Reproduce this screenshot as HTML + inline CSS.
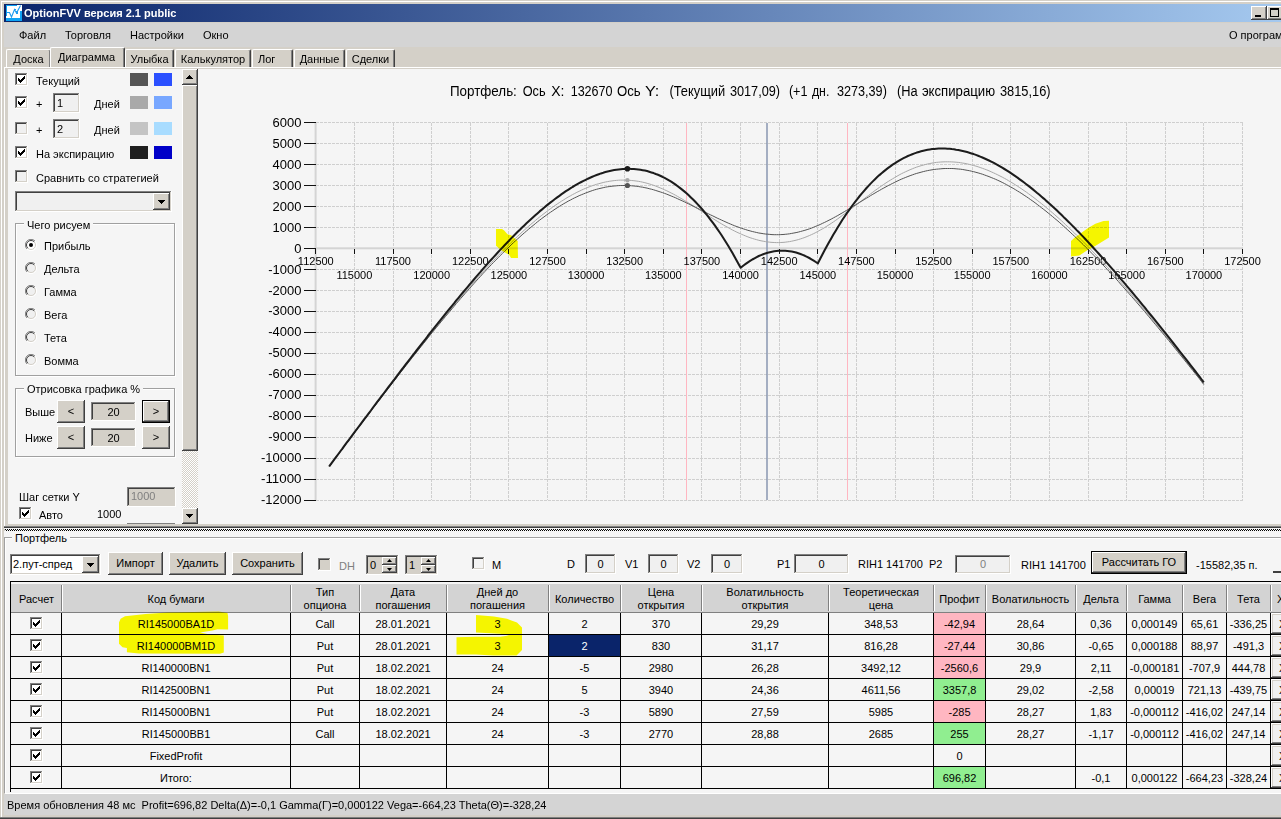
<!DOCTYPE html>
<html lang="ru"><head><meta charset="utf-8"><title>OptionFVV версия 2.1 public</title>
<style>
html,body{margin:0;padding:0;background:#d4d0c8;overflow:hidden;}
#w{position:relative;width:1281px;height:819px;overflow:hidden;font-family:"Liberation Sans",sans-serif;font-size:11px;line-height:13px;color:#000;}
.a{position:absolute;box-sizing:border-box;}
.t{white-space:nowrap;margin-top:1px;}
.th,.td{text-align:center;}
.th{line-height:13px;}
.raised{box-shadow:inset -1px -1px #404040,inset 1px 1px #fff,inset -2px -2px #808080,inset 2px 2px #d4d0c8;}
.sunken{box-shadow:inset -1px -1px #fff,inset 1px 1px #808080,inset -2px -2px #d4d0c8,inset 2px 2px #404040;}
.grp{border:1px solid #a0a0a0;box-shadow:1px 1px 0 #fff, inset 1px 1px 0 #fff;}
.tab{background:#d4d0c8;border-top:1px solid #fff;border-left:1px solid #fff;border-right:1px solid #404040;box-shadow:inset -1px 0 #808080;border-radius:2px 2px 0 0;}
.chart{position:absolute;left:0;top:0;font-family:"Liberation Sans",sans-serif;}
.chart .yl{font-size:13.6px;fill:#000;}
.chart .xl{font-size:11px;fill:#000;}
.chart .ct{font-size:13.8px;fill:#000;}
.hl{fill:#ffff00;mix-blend-mode:multiply;}
</style></head>
<body><div id="w">
<div class="a" style="left:0px;top:0px;width:1281px;height:819px;background:#d4d0c8"></div>
<div class="a" style="left:1px;top:1px;width:1280px;height:1px;background:#fff"></div>
<div class="a" style="left:1px;top:1px;width:1px;height:816px;background:#fff"></div>
<div class="a" style="left:0px;top:817px;width:1281px;height:1px;background:#808080"></div>
<div class="a" style="left:0px;top:818px;width:1281px;height:1px;background:#404040"></div>
<div class="a" style="left:4px;top:4px;width:1277px;height:18px;background:linear-gradient(90deg,#0a246a 0,#a6caf0 1286px)"></div>
<svg class="a" style="left:6px;top:5px" width="16" height="16" viewBox="0 0 16 16" shape-rendering="crispEdges"><rect width="16" height="16" fill="#fff"/><path d="M0,0 H11 V1 H1 V11 H0 Z M0,13 H16 V6 H14 V13 H0 V16 H16 V13" fill="#0ea2f4"/><rect x="0" y="14" width="16" height="2" fill="#0ea2f4"/><path d="M1,7.5 H3.5 L5.5,12 L8.5,4.5 L10.5,8 L14.5,0.5" stroke="#1e9cf0" stroke-width="1.1" fill="none" shape-rendering="auto"/><rect x="8" y="4" width="2" height="1" fill="#1e9cf0"/><rect x="10" y="6" width="2" height="3" fill="#1e9cf0"/></svg>
<div class="a t" style="left:24px;top:6px;color:#fff;font-weight:bold;">OptionFVV версия 2.1 public</div>
<div class="a raised" style="left:1251px;top:6px;width:16px;height:14px;background:#d4d0c8"><div class="a" style="left:4px;top:9px;width:6px;height:2px;background:#000"></div></div>
<div class="a raised" style="left:1267px;top:6px;width:16px;height:14px;background:#d4d0c8"><div class="a" style="left:3px;top:2px;width:9px;height:9px;border:1px solid #000;border-top-width:2px;box-sizing:border-box"></div></div>
<div class="a" style="left:4px;top:23px;width:1277px;height:24px;background:#d4d4d4"></div>
<div class="a t" style="left:19px;top:28px;">Файл</div>
<div class="a t" style="left:65px;top:28px;">Торговля</div>
<div class="a t" style="left:130px;top:28px;">Настройки</div>
<div class="a t" style="left:203px;top:28px;">Окно</div>
<div class="a t" style="left:1229px;top:28px;">О программе</div>
<div class="a tab" style="left:6px;top:49px;width:45px;height:18px;"><div class="a t" style="left:0;top:2px;width:43px;text-align:center">Доска</div></div>
<div class="a tab" style="left:125px;top:49px;width:49px;height:18px;"><div class="a t" style="left:0;top:2px;width:47px;text-align:center">Улыбка</div></div>
<div class="a tab" style="left:175px;top:49px;width:76px;height:18px;"><div class="a t" style="left:0;top:2px;width:74px;text-align:center">Калькулятор</div></div>
<div class="a tab" style="left:252px;top:49px;width:41px;height:18px;"><div class="a t" style="left:5px;top:2px">Лог</div></div>
<div class="a tab" style="left:294px;top:49px;width:51px;height:18px;"><div class="a t" style="left:0;top:2px;width:49px;text-align:center">Данные</div></div>
<div class="a tab" style="left:346px;top:49px;width:49px;height:18px;"><div class="a t" style="left:0;top:2px;width:47px;text-align:center">Сделки</div></div>
<div class="a tab" style="left:50px;top:47px;width:75px;height:21px;"><div class="a t" style="left:7px;top:2px">Диаграмма</div></div>
<div class="a" style="left:4px;top:67px;width:1277px;height:1px;background:#fff"></div>
<div class="a" style="left:4px;top:67px;width:1px;height:459px;background:#fff"></div>
<div class="a" style="left:8px;top:69px;width:1273px;height:455px;background:#f5f5f5"></div>
<div class="a sunken" style="left:15px;top:73px;width:13px;height:13px;background:#fff"><svg class="a" style="left:3px;top:3px" width="7" height="7" viewBox="0 0 7 7" shape-rendering="crispEdges"><path d="M0.5,2 V5 M1.5,3 V6 M2.5,4 V7 M3.5,3 V6 M4.5,2 V5 M5.5,1 V4 M6.5,0 V3" stroke="#000" stroke-width="1" fill="none"/></svg></div>
<div class="a t" style="left:36px;top:74px;">Текущий</div>
<div class="a" style="left:130px;top:73px;width:18px;height:13px;background:#555"></div>
<div class="a" style="left:154px;top:73px;width:18px;height:13px;background:#2b50ff"></div>
<div class="a sunken" style="left:15px;top:96px;width:13px;height:13px;background:#fff"><svg class="a" style="left:3px;top:3px" width="7" height="7" viewBox="0 0 7 7" shape-rendering="crispEdges"><path d="M0.5,2 V5 M1.5,3 V6 M2.5,4 V7 M3.5,3 V6 M4.5,2 V5 M5.5,1 V4 M6.5,0 V3" stroke="#000" stroke-width="1" fill="none"/></svg></div>
<div class="a t" style="left:36px;top:97px;">+</div>
<div class="a sunken" style="left:53px;top:93px;width:27px;height:20px;background:#f0f0f0"><div class="a t" style="left:4px;top:3px">1</div></div>
<div class="a t" style="left:94px;top:97px;">Дней</div>
<div class="a" style="left:130px;top:96px;width:18px;height:13px;background:#a9a9a9"></div>
<div class="a" style="left:154px;top:96px;width:18px;height:13px;background:#78a7ff"></div>
<div class="a sunken" style="left:15px;top:122px;width:13px;height:13px;background:#f0f0f0"></div>
<div class="a t" style="left:36px;top:123px;">+</div>
<div class="a sunken" style="left:53px;top:119px;width:27px;height:20px;background:#f0f0f0"><div class="a t" style="left:4px;top:3px">2</div></div>
<div class="a t" style="left:94px;top:123px;">Дней</div>
<div class="a" style="left:130px;top:122px;width:18px;height:13px;background:#c4c4c4"></div>
<div class="a" style="left:154px;top:122px;width:18px;height:13px;background:#a8dcff"></div>
<div class="a sunken" style="left:15px;top:146px;width:13px;height:13px;background:#fff"><svg class="a" style="left:3px;top:3px" width="7" height="7" viewBox="0 0 7 7" shape-rendering="crispEdges"><path d="M0.5,2 V5 M1.5,3 V6 M2.5,4 V7 M3.5,3 V6 M4.5,2 V5 M5.5,1 V4 M6.5,0 V3" stroke="#000" stroke-width="1" fill="none"/></svg></div>
<div class="a t" style="left:36px;top:147px;">На экспирацию</div>
<div class="a" style="left:130px;top:146px;width:18px;height:13px;background:#1e1e1e"></div>
<div class="a" style="left:154px;top:146px;width:18px;height:13px;background:#0000c8"></div>
<div class="a sunken" style="left:15px;top:170px;width:13px;height:13px;background:#f0f0f0"></div>
<div class="a t" style="left:36px;top:171px;">Сравнить со стратегией</div>
<div class="a sunken" style="left:15px;top:191px;width:157px;height:21px;background:#f0f0f0"><div class="a raised" style="left:138px;top:2px;width:17px;height:17px;background:#d4d0c8"><svg class="a" style="left:5px;top:7px" width="7" height="4" viewBox="0 0 7 4" shape-rendering="crispEdges"><path d="M0,0 H7 L3.5,4 Z" fill="#000"/></svg></div></div>
<div class="a grp" style="left:15px;top:223px;width:160px;height:153px;"></div>
<div class="a t" style="left:24px;top:218px;background:#f5f5f5;padding:0 3px">Чего рисуем</div>
<svg class="a" style="left:25px;top:239px" width="12" height="12" viewBox="0 0 12 12"><circle cx="6" cy="6" r="5.5" fill="#fff"/><path d="M10,2 A5.5,5.5 0 0 0 2,10" stroke="#808080" stroke-width="1" fill="none"/><path d="M2,10 A5.5,5.5 0 0 0 10,2" stroke="#fff" stroke-width="1" fill="none"/><path d="M2.8,9.2 A4.5,4.5 0 0 0 9.2,2.8" stroke="#d4d0c8" stroke-width="1" fill="none"/><path d="M9.2,2.8 A4.5,4.5 0 0 0 2.8,9.2" stroke="#404040" stroke-width="1" fill="none"/><circle cx="6" cy="6" r="2" fill="#000"/></svg>
<div class="a t" style="left:44px;top:239px;">Прибыль</div>
<svg class="a" style="left:25px;top:262px" width="12" height="12" viewBox="0 0 12 12"><circle cx="6" cy="6" r="5.5" fill="#f0f0f0"/><path d="M10,2 A5.5,5.5 0 0 0 2,10" stroke="#808080" stroke-width="1" fill="none"/><path d="M2,10 A5.5,5.5 0 0 0 10,2" stroke="#fff" stroke-width="1" fill="none"/><path d="M2.8,9.2 A4.5,4.5 0 0 0 9.2,2.8" stroke="#d4d0c8" stroke-width="1" fill="none"/><path d="M9.2,2.8 A4.5,4.5 0 0 0 2.8,9.2" stroke="#404040" stroke-width="1" fill="none"/></svg>
<div class="a t" style="left:44px;top:262px;">Дельта</div>
<svg class="a" style="left:25px;top:285px" width="12" height="12" viewBox="0 0 12 12"><circle cx="6" cy="6" r="5.5" fill="#f0f0f0"/><path d="M10,2 A5.5,5.5 0 0 0 2,10" stroke="#808080" stroke-width="1" fill="none"/><path d="M2,10 A5.5,5.5 0 0 0 10,2" stroke="#fff" stroke-width="1" fill="none"/><path d="M2.8,9.2 A4.5,4.5 0 0 0 9.2,2.8" stroke="#d4d0c8" stroke-width="1" fill="none"/><path d="M9.2,2.8 A4.5,4.5 0 0 0 2.8,9.2" stroke="#404040" stroke-width="1" fill="none"/></svg>
<div class="a t" style="left:44px;top:285px;">Гамма</div>
<svg class="a" style="left:25px;top:308px" width="12" height="12" viewBox="0 0 12 12"><circle cx="6" cy="6" r="5.5" fill="#f0f0f0"/><path d="M10,2 A5.5,5.5 0 0 0 2,10" stroke="#808080" stroke-width="1" fill="none"/><path d="M2,10 A5.5,5.5 0 0 0 10,2" stroke="#fff" stroke-width="1" fill="none"/><path d="M2.8,9.2 A4.5,4.5 0 0 0 9.2,2.8" stroke="#d4d0c8" stroke-width="1" fill="none"/><path d="M9.2,2.8 A4.5,4.5 0 0 0 2.8,9.2" stroke="#404040" stroke-width="1" fill="none"/></svg>
<div class="a t" style="left:44px;top:308px;">Вега</div>
<svg class="a" style="left:25px;top:331px" width="12" height="12" viewBox="0 0 12 12"><circle cx="6" cy="6" r="5.5" fill="#f0f0f0"/><path d="M10,2 A5.5,5.5 0 0 0 2,10" stroke="#808080" stroke-width="1" fill="none"/><path d="M2,10 A5.5,5.5 0 0 0 10,2" stroke="#fff" stroke-width="1" fill="none"/><path d="M2.8,9.2 A4.5,4.5 0 0 0 9.2,2.8" stroke="#d4d0c8" stroke-width="1" fill="none"/><path d="M9.2,2.8 A4.5,4.5 0 0 0 2.8,9.2" stroke="#404040" stroke-width="1" fill="none"/></svg>
<div class="a t" style="left:44px;top:331px;">Тета</div>
<svg class="a" style="left:25px;top:354px" width="12" height="12" viewBox="0 0 12 12"><circle cx="6" cy="6" r="5.5" fill="#f0f0f0"/><path d="M10,2 A5.5,5.5 0 0 0 2,10" stroke="#808080" stroke-width="1" fill="none"/><path d="M2,10 A5.5,5.5 0 0 0 10,2" stroke="#fff" stroke-width="1" fill="none"/><path d="M2.8,9.2 A4.5,4.5 0 0 0 9.2,2.8" stroke="#d4d0c8" stroke-width="1" fill="none"/><path d="M9.2,2.8 A4.5,4.5 0 0 0 2.8,9.2" stroke="#404040" stroke-width="1" fill="none"/></svg>
<div class="a t" style="left:44px;top:354px;">Вомма</div>
<div class="a grp" style="left:15px;top:388px;width:160px;height:69px;"></div>
<div class="a t" style="left:24px;top:382px;background:#f5f5f5;padding:0 3px">Отрисовка графика %</div>
<div class="a t" style="left:25px;top:405px;">Выше</div>
<div class="a t" style="left:25px;top:431px;">Ниже</div>
<div class="a raised" style="left:57px;top:400px;width:28px;height:23px;background:#d4d0c8"><div class="a t" style="left:0;top:4px;width:28px;text-align:center">&lt;</div></div>
<div class="a sunken" style="left:91px;top:402px;width:45px;height:19px;background:#d4d0c8"><div class="a t" style="left:0;top:3px;width:45px;text-align:center">20</div></div>
<div class="a" style="left:142px;top:400px;width:28px;height:23px;background:#000"><div class="a raised" style="left:1px;top:1px;width:26px;height:21px;background:#d4d0c8"><div class="a t" style="left:0;top:3px;width:26px;text-align:center">&gt;</div></div></div>
<div class="a raised" style="left:57px;top:426px;width:28px;height:23px;background:#d4d0c8"><div class="a t" style="left:0;top:4px;width:28px;text-align:center">&lt;</div></div>
<div class="a sunken" style="left:91px;top:428px;width:45px;height:19px;background:#d4d0c8"><div class="a t" style="left:0;top:3px;width:45px;text-align:center">20</div></div>
<div class="a raised" style="left:142px;top:426px;width:28px;height:23px;background:#d4d0c8"><div class="a t" style="left:0;top:4px;width:28px;text-align:center">&gt;</div></div>
<div class="a t" style="left:19px;top:490px;">Шаг сетки Y</div>
<div class="a sunken" style="left:127px;top:487px;width:49px;height:20px;background:#d4d0c8"><div class="a t" style="left:4px;top:2px;color:#808080">1000</div></div>
<div class="a sunken" style="left:19px;top:507px;width:13px;height:13px;background:#fff"><svg class="a" style="left:3px;top:3px" width="7" height="7" viewBox="0 0 7 7" shape-rendering="crispEdges"><path d="M0.5,2 V5 M1.5,3 V6 M2.5,4 V7 M3.5,3 V6 M4.5,2 V5 M5.5,1 V4 M6.5,0 V3" stroke="#000" stroke-width="1" fill="none"/></svg></div>
<div class="a t" style="left:39px;top:508px;">Авто</div>
<div class="a t" style="left:97px;top:507px;">1000</div>
<div class="a" style="left:127px;top:523px;width:48px;height:1px;background:#808080"></div>
<div class="a" style="left:182px;top:69px;width:16px;height:455px;background:#eae8e4;background-image:repeating-conic-gradient(#fff 0 25%,#d4d0c8 0 50%);background-size:2px 2px"></div>
<div class="a raised" style="left:182px;top:69px;width:16px;height:16px;background:#d4d0c8"><svg class="a" style="left:4px;top:6px" width="7" height="4" viewBox="0 0 7 4" shape-rendering="crispEdges"><path d="M0,4 H7 L3.5,0 Z" fill="#000"/></svg></div>
<div class="a raised" style="left:182px;top:85px;width:16px;height:366px;background:#d4d0c8"></div>
<div class="a raised" style="left:182px;top:508px;width:16px;height:16px;background:#d4d0c8"><svg class="a" style="left:4px;top:6px" width="7" height="4" viewBox="0 0 7 4" shape-rendering="crispEdges"><path d="M0,0 H7 L3.5,4 Z" fill="#000"/></svg></div>
<div class="a" style="left:198px;top:68px;width:1083px;height:456px;overflow:hidden"><svg class="chart" width="1083" height="456" viewBox="198 68 1083 456">
<path d="M316,122.5 H1243 M316,143.5 H1243 M316,164.5 H1243 M316,185.5 H1243 M316,206.5 H1243 M316,227.5 H1243 M316,248.5 H1243 M316,269.5 H1243 M316,290.5 H1243 M316,311.5 H1243 M316,332.5 H1243 M316,353.5 H1243 M316,374.5 H1243 M316,395.5 H1243 M316,416.5 H1243 M316,437.5 H1243 M316,458.5 H1243 M316,479.5 H1243 M316,500.5 H1243 M354.5,123 V500 M393.5,123 V500 M431.5,123 V500 M470.5,123 V500 M508.5,123 V500 M547.5,123 V500 M586.5,123 V500 M624.5,123 V500 M663.5,123 V500 M701.5,123 V500 M740.5,123 V500 M779.5,123 V500 M817.5,123 V500 M856.5,123 V500 M895.5,123 V500 M933.5,123 V500 M972.5,123 V500 M1010.5,123 V500 M1049.5,123 V500 M1088.5,123 V500 M1126.5,123 V500 M1165.5,123 V500 M1203.5,123 V500 M1242.5,123 V500" stroke="#cfcfcf" stroke-width="1" stroke-dasharray="3 1" fill="none" shape-rendering="crispEdges"/>
<rect x="314.6" y="123" width="2" height="377" fill="#d4d4d4"/>
<rect x="314.6" y="247.3" width="928" height="2" fill="#d4d4d4"/>
<path d="M304,122.5 H316 M304,143.5 H316 M304,164.5 H316 M304,185.5 H316 M304,206.5 H316 M304,227.5 H316 M304,248.5 H316 M304,269.5 H316 M304,290.5 H316 M304,311.5 H316 M304,332.5 H316 M304,353.5 H316 M304,374.5 H316 M304,395.5 H316 M304,416.5 H316 M304,437.5 H316 M304,458.5 H316 M304,479.5 H316 M304,500.5 H316 M315.5,249 V254 M354.5,249 V254 M393.5,249 V254 M431.5,249 V254 M470.5,249 V254 M508.5,249 V254 M547.5,249 V254 M586.5,249 V254 M624.5,249 V254 M663.5,249 V254 M701.5,249 V254 M740.5,249 V254 M779.5,249 V254 M817.5,249 V254 M856.5,249 V254 M895.5,249 V254 M933.5,249 V254 M972.5,249 V254 M1010.5,249 V254 M1049.5,249 V254 M1088.5,249 V254 M1126.5,249 V254 M1165.5,249 V254 M1203.5,249 V254 M1242.5,249 V254" stroke="#111" stroke-width="1" fill="none" shape-rendering="crispEdges"/>
<path d="M686.5,123 V500 M847.5,123 V500" stroke="#ffb6c1" stroke-width="1" shape-rendering="crispEdges"/>
<path d="M767,123 V500" stroke="#8896b0" stroke-width="1.5"/>
<text x="272.6" y="126.8" class="yl" textLength="28.9" lengthAdjust="spacingAndGlyphs">6000</text>
<text x="272.6" y="147.8" class="yl" textLength="28.9" lengthAdjust="spacingAndGlyphs">5000</text>
<text x="272.6" y="168.7" class="yl" textLength="28.9" lengthAdjust="spacingAndGlyphs">4000</text>
<text x="272.6" y="189.7" class="yl" textLength="28.9" lengthAdjust="spacingAndGlyphs">3000</text>
<text x="272.6" y="210.6" class="yl" textLength="28.9" lengthAdjust="spacingAndGlyphs">2000</text>
<text x="272.6" y="231.6" class="yl" textLength="28.9" lengthAdjust="spacingAndGlyphs">1000</text>
<text x="294.3" y="252.6" class="yl" textLength="7.2" lengthAdjust="spacingAndGlyphs">0</text>
<text x="268.2" y="273.5" class="yl" textLength="33.2" lengthAdjust="spacingAndGlyphs">-1000</text>
<text x="268.2" y="294.5" class="yl" textLength="33.2" lengthAdjust="spacingAndGlyphs">-2000</text>
<text x="268.2" y="315.4" class="yl" textLength="33.2" lengthAdjust="spacingAndGlyphs">-3000</text>
<text x="268.2" y="336.4" class="yl" textLength="33.2" lengthAdjust="spacingAndGlyphs">-4000</text>
<text x="268.2" y="357.4" class="yl" textLength="33.2" lengthAdjust="spacingAndGlyphs">-5000</text>
<text x="268.2" y="378.3" class="yl" textLength="33.2" lengthAdjust="spacingAndGlyphs">-6000</text>
<text x="268.2" y="399.3" class="yl" textLength="33.2" lengthAdjust="spacingAndGlyphs">-7000</text>
<text x="268.2" y="420.3" class="yl" textLength="33.2" lengthAdjust="spacingAndGlyphs">-8000</text>
<text x="268.2" y="441.2" class="yl" textLength="33.2" lengthAdjust="spacingAndGlyphs">-9000</text>
<text x="261.0" y="462.2" class="yl" textLength="40.5" lengthAdjust="spacingAndGlyphs">-10000</text>
<text x="261.0" y="483.1" class="yl" textLength="40.5" lengthAdjust="spacingAndGlyphs">-11000</text>
<text x="261.0" y="504.1" class="yl" textLength="40.5" lengthAdjust="spacingAndGlyphs">-12000</text>
<text x="315.8" y="264.8" text-anchor="middle" class="xl">112500</text>
<text x="354.4" y="278.8" text-anchor="middle" class="xl">115000</text>
<text x="393.0" y="264.8" text-anchor="middle" class="xl">117500</text>
<text x="431.7" y="278.8" text-anchor="middle" class="xl">120000</text>
<text x="470.3" y="264.8" text-anchor="middle" class="xl">122500</text>
<text x="508.9" y="278.8" text-anchor="middle" class="xl">125000</text>
<text x="547.5" y="264.8" text-anchor="middle" class="xl">127500</text>
<text x="586.1" y="278.8" text-anchor="middle" class="xl">130000</text>
<text x="624.7" y="264.8" text-anchor="middle" class="xl">132500</text>
<text x="663.3" y="278.8" text-anchor="middle" class="xl">135000</text>
<text x="701.9" y="264.8" text-anchor="middle" class="xl">137500</text>
<text x="740.6" y="278.8" text-anchor="middle" class="xl">140000</text>
<text x="779.2" y="264.8" text-anchor="middle" class="xl">142500</text>
<text x="817.8" y="278.8" text-anchor="middle" class="xl">145000</text>
<text x="856.4" y="264.8" text-anchor="middle" class="xl">147500</text>
<text x="895.0" y="278.8" text-anchor="middle" class="xl">150000</text>
<text x="933.6" y="264.8" text-anchor="middle" class="xl">152500</text>
<text x="972.2" y="278.8" text-anchor="middle" class="xl">155000</text>
<text x="1010.8" y="264.8" text-anchor="middle" class="xl">157500</text>
<text x="1049.4" y="278.8" text-anchor="middle" class="xl">160000</text>
<text x="1088.1" y="264.8" text-anchor="middle" class="xl">162500</text>
<text x="1126.7" y="278.8" text-anchor="middle" class="xl">165000</text>
<text x="1165.3" y="264.8" text-anchor="middle" class="xl">167500</text>
<text x="1203.9" y="278.8" text-anchor="middle" class="xl">170000</text>
<text x="1242.5" y="264.8" text-anchor="middle" class="xl">172500</text>
<path d="M329.2,466.5 L331.4,463.5 L333.6,460.6 L335.8,457.6 L338.0,454.7 L340.2,451.8 L342.4,448.8 L344.5,445.9 L346.7,443.0 L348.9,440.1 L351.1,437.1 L353.3,434.2 L355.5,431.3 L357.7,428.4 L359.9,425.4 L362.1,422.5 L364.3,419.6 L366.5,416.7 L368.7,413.8 L370.9,410.9 L373.0,408.0 L375.2,405.1 L377.4,402.2 L379.6,399.4 L381.8,396.5 L384.0,393.6 L386.2,390.7 L388.4,387.9 L390.6,385.0 L392.8,382.1 L395.0,379.3 L397.2,376.4 L399.3,373.6 L401.5,370.8 L403.7,367.9 L405.9,365.1 L408.1,362.3 L410.3,359.5 L412.5,356.7 L414.7,353.9 L416.9,351.1 L419.1,348.3 L421.3,345.5 L423.5,342.8 L425.7,340.0 L427.8,337.3 L430.0,334.5 L432.2,331.8 L434.4,329.1 L436.6,326.4 L438.8,323.6 L441.0,321.0 L443.2,318.3 L445.4,315.6 L447.6,312.9 L449.8,310.3 L452.0,307.7 L454.2,305.0 L456.3,302.4 L458.5,299.8 L460.7,297.2 L462.9,294.7 L465.1,292.1 L467.3,289.6 L469.5,287.0 L471.7,284.5 L473.9,282.0 L476.1,279.6 L478.3,277.1 L480.5,274.7 L482.6,272.2 L484.8,269.8 L487.0,267.4 L489.2,265.1 L491.4,262.7 L493.6,260.4 L495.8,258.1 L498.0,255.8 L500.2,253.5 L502.4,251.3 L504.6,249.0 L506.8,246.8 L509.0,244.7 L511.1,242.5 L513.3,240.4 L515.5,238.3 L517.7,236.2 L519.9,234.2 L522.1,232.1 L524.3,230.1 L526.5,228.2 L528.7,226.2 L530.9,224.3 L533.1,222.5 L535.3,220.6 L537.4,218.8 L539.6,217.0 L541.8,215.3 L544.0,213.6 L546.2,211.9 L548.4,210.2 L550.6,208.6 L552.8,207.0 L555.0,205.5 L557.2,204.0 L559.4,202.6 L561.6,201.1 L563.8,199.8 L565.9,198.4 L568.1,197.1 L570.3,195.9 L572.5,194.6 L574.7,193.5 L576.9,192.3 L579.1,191.3 L581.3,190.2 L583.5,189.2 L585.7,188.3 L587.9,187.4 L590.1,186.5 L592.3,185.7 L594.4,185.0 L596.6,184.3 L598.8,183.7 L601.0,183.1 L603.2,182.5 L605.4,182.0 L607.6,181.6 L609.8,181.2 L612.0,180.9 L614.2,180.6 L616.4,180.4 L618.6,180.2 L620.7,180.1 L622.9,180.1 L625.1,180.1 L627.3,180.2 L629.5,180.3 L631.7,180.5 L633.9,180.7 L636.1,181.0 L638.3,181.3 L640.5,181.7 L642.7,182.2 L644.9,182.7 L647.1,183.3 L649.2,183.9 L651.4,184.6 L653.6,185.3 L655.8,186.1 L658.0,187.0 L660.2,187.9 L662.4,188.8 L664.6,189.8 L666.8,190.8 L669.0,191.9 L671.2,193.0 L673.4,194.1 L675.6,195.3 L677.7,196.5 L679.9,197.8 L682.1,199.0 L684.3,200.4 L686.5,201.7 L688.7,203.0 L690.9,204.4 L693.1,205.8 L695.3,207.2 L697.5,208.6 L699.7,210.0 L701.9,211.4 L704.0,212.9 L706.2,214.3 L708.4,215.7 L710.6,217.1 L712.8,218.5 L715.0,219.9 L717.2,221.2 L719.4,222.6 L721.6,223.9 L723.8,225.2 L726.0,226.4 L728.2,227.6 L730.4,228.8 L732.5,230.0 L734.7,231.1 L736.9,232.2 L739.1,233.2 L740.7,233.9 L741.3,234.2 L743.5,235.1 L745.7,236.0 L747.9,236.9 L750.1,237.7 L752.3,238.4 L754.5,239.1 L756.7,239.7 L758.8,240.3 L761.0,240.8 L763.2,241.2 L765.4,241.6 L767.6,241.9 L769.8,242.2 L772.0,242.4 L774.2,242.5 L776.4,242.6 L778.6,242.6 L780.8,242.5 L783.0,242.4 L785.2,242.2 L787.3,241.9 L789.5,241.6 L791.7,241.2 L793.9,240.7 L796.1,240.2 L798.3,239.6 L800.5,238.9 L802.7,238.2 L804.9,237.4 L807.1,236.5 L809.3,235.6 L811.5,234.6 L813.7,233.6 L815.8,232.5 L817.9,231.4 L818.0,231.3 L820.2,230.1 L822.4,228.9 L824.6,227.6 L826.8,226.2 L829.0,224.8 L831.2,223.4 L833.4,221.9 L835.6,220.4 L837.8,218.8 L840.0,217.2 L842.1,215.6 L844.3,214.0 L846.5,212.4 L848.7,210.7 L850.9,209.0 L853.1,207.3 L855.3,205.6 L857.5,203.9 L859.7,202.2 L861.9,200.5 L864.1,198.8 L866.3,197.1 L868.5,195.5 L870.6,193.8 L872.8,192.2 L875.0,190.5 L877.2,189.0 L879.4,187.4 L881.6,185.9 L883.8,184.4 L886.0,182.9 L888.2,181.5 L890.4,180.1 L892.6,178.8 L894.8,177.5 L897.0,176.2 L899.1,175.0 L901.3,173.8 L903.5,172.7 L905.7,171.7 L907.9,170.7 L910.1,169.7 L912.3,168.8 L914.5,167.9 L916.7,167.1 L918.9,166.4 L921.1,165.7 L923.3,165.1 L925.4,164.5 L927.6,164.0 L929.8,163.5 L932.0,163.1 L934.2,162.7 L936.4,162.4 L938.6,162.2 L940.8,162.0 L943.0,161.9 L945.2,161.8 L947.4,161.8 L949.6,161.8 L951.8,161.9 L953.9,162.0 L956.1,162.2 L958.3,162.4 L960.5,162.7 L962.7,163.1 L964.9,163.4 L967.1,163.9 L969.3,164.4 L971.5,164.9 L973.7,165.5 L975.9,166.1 L978.1,166.8 L980.2,167.5 L982.4,168.3 L984.6,169.1 L986.8,169.9 L989.0,170.8 L991.2,171.8 L993.4,172.8 L995.6,173.8 L997.8,174.9 L1000.0,176.0 L1002.2,177.1 L1004.4,178.3 L1006.6,179.5 L1008.7,180.8 L1010.9,182.1 L1013.1,183.4 L1015.3,184.8 L1017.5,186.2 L1019.7,187.6 L1021.9,189.1 L1024.1,190.6 L1026.3,192.1 L1028.5,193.7 L1030.7,195.3 L1032.9,196.9 L1035.1,198.6 L1037.2,200.3 L1039.4,202.0 L1041.6,203.7 L1043.8,205.5 L1046.0,207.3 L1048.2,209.2 L1050.4,211.0 L1052.6,212.9 L1054.8,214.8 L1057.0,216.8 L1059.2,218.7 L1061.4,220.7 L1063.5,222.7 L1065.7,224.8 L1067.9,226.8 L1070.1,228.9 L1072.3,231.0 L1074.5,233.1 L1076.7,235.3 L1078.9,237.4 L1081.1,239.6 L1083.3,241.8 L1085.5,244.0 L1087.7,246.3 L1089.9,248.5 L1092.0,250.8 L1094.2,253.1 L1096.4,255.4 L1098.6,257.8 L1100.8,260.1 L1103.0,262.5 L1105.2,264.9 L1107.4,267.3 L1109.6,269.7 L1111.8,272.1 L1114.0,274.5 L1116.2,277.0 L1118.4,279.5 L1120.5,281.9 L1122.7,284.4 L1124.9,286.9 L1127.1,289.5 L1129.3,292.0 L1131.5,294.5 L1133.7,297.1 L1135.9,299.7 L1138.1,302.2 L1140.3,304.8 L1142.5,307.4 L1144.7,310.1 L1146.8,312.7 L1149.0,315.3 L1151.2,317.9 L1153.4,320.6 L1155.6,323.3 L1157.8,325.9 L1160.0,328.6 L1162.2,331.3 L1164.4,334.0 L1166.6,336.7 L1168.8,339.4 L1171.0,342.1 L1173.2,344.8 L1175.3,347.6 L1177.5,350.3 L1179.7,353.1 L1181.9,355.8 L1184.1,358.6 L1186.3,361.3 L1188.5,364.1 L1190.7,366.9 L1192.9,369.7 L1195.1,372.5 L1197.3,375.3 L1199.5,378.1 L1201.6,380.9 L1203.8,383.7" stroke="#a8a8a8" stroke-width="1" fill="none"/>
<path d="M329.2,466.6 L331.4,463.7 L333.6,460.7 L335.8,457.8 L338.0,454.9 L340.2,451.9 L342.4,449.0 L344.5,446.1 L346.7,443.2 L348.9,440.3 L351.1,437.3 L353.3,434.4 L355.5,431.5 L357.7,428.6 L359.9,425.7 L362.1,422.8 L364.3,419.9 L366.5,417.0 L368.7,414.1 L370.9,411.2 L373.0,408.3 L375.2,405.5 L377.4,402.6 L379.6,399.7 L381.8,396.9 L384.0,394.0 L386.2,391.1 L388.4,388.3 L390.6,385.4 L392.8,382.6 L395.0,379.8 L397.2,376.9 L399.3,374.1 L401.5,371.3 L403.7,368.5 L405.9,365.7 L408.1,362.9 L410.3,360.1 L412.5,357.3 L414.7,354.5 L416.9,351.8 L419.1,349.0 L421.3,346.3 L423.5,343.5 L425.7,340.8 L427.8,338.1 L430.0,335.3 L432.2,332.6 L434.4,329.9 L436.6,327.3 L438.8,324.6 L441.0,321.9 L443.2,319.3 L445.4,316.6 L447.6,314.0 L449.8,311.4 L452.0,308.8 L454.2,306.2 L456.3,303.6 L458.5,301.1 L460.7,298.5 L462.9,296.0 L465.1,293.5 L467.3,291.0 L469.5,288.5 L471.7,286.0 L473.9,283.6 L476.1,281.1 L478.3,278.7 L480.5,276.3 L482.6,273.9 L484.8,271.6 L487.0,269.2 L489.2,266.9 L491.4,264.6 L493.6,262.3 L495.8,260.1 L498.0,257.8 L500.2,255.6 L502.4,253.4 L504.6,251.2 L506.8,249.1 L509.0,247.0 L511.1,244.9 L513.3,242.8 L515.5,240.8 L517.7,238.8 L519.9,236.8 L522.1,234.8 L524.3,232.9 L526.5,231.0 L528.7,229.1 L530.9,227.3 L533.1,225.5 L535.3,223.7 L537.4,221.9 L539.6,220.2 L541.8,218.5 L544.0,216.9 L546.2,215.3 L548.4,213.7 L550.6,212.2 L552.8,210.7 L555.0,209.2 L557.2,207.8 L559.4,206.4 L561.6,205.0 L563.8,203.7 L565.9,202.5 L568.1,201.2 L570.3,200.1 L572.5,198.9 L574.7,197.8 L576.9,196.8 L579.1,195.7 L581.3,194.8 L583.5,193.9 L585.7,193.0 L587.9,192.2 L590.1,191.4 L592.3,190.6 L594.4,189.9 L596.6,189.3 L598.8,188.7 L601.0,188.2 L603.2,187.7 L605.4,187.2 L607.6,186.8 L609.8,186.5 L612.0,186.2 L614.2,186.0 L616.4,185.8 L618.6,185.6 L620.7,185.5 L622.9,185.5 L625.1,185.5 L627.3,185.5 L629.5,185.6 L631.7,185.8 L633.9,186.0 L636.1,186.2 L638.3,186.5 L640.5,186.9 L642.7,187.2 L644.9,187.7 L647.1,188.1 L649.2,188.7 L651.4,189.2 L653.6,189.8 L655.8,190.5 L658.0,191.2 L660.2,191.9 L662.4,192.6 L664.6,193.4 L666.8,194.2 L669.0,195.1 L671.2,196.0 L673.4,196.9 L675.6,197.8 L677.7,198.8 L679.9,199.8 L682.1,200.8 L684.3,201.8 L686.5,202.9 L688.7,203.9 L690.9,205.0 L693.1,206.1 L695.3,207.2 L697.5,208.3 L699.7,209.4 L701.9,210.5 L704.0,211.6 L706.2,212.7 L708.4,213.8 L710.6,214.9 L712.8,215.9 L715.0,217.0 L717.2,218.1 L719.4,219.1 L721.6,220.1 L723.8,221.1 L726.0,222.1 L728.2,223.1 L730.4,224.0 L732.5,224.9 L734.7,225.8 L736.9,226.6 L739.1,227.4 L740.7,228.0 L741.3,228.2 L743.5,228.9 L745.7,229.6 L747.9,230.3 L750.1,230.9 L752.3,231.5 L754.5,232.0 L756.7,232.5 L758.8,233.0 L761.0,233.3 L763.2,233.7 L765.4,234.0 L767.6,234.2 L769.8,234.4 L772.0,234.6 L774.2,234.7 L776.4,234.7 L778.6,234.7 L780.8,234.6 L783.0,234.5 L785.2,234.3 L787.3,234.1 L789.5,233.8 L791.7,233.4 L793.9,233.0 L796.1,232.6 L798.3,232.1 L800.5,231.5 L802.7,230.9 L804.9,230.3 L807.1,229.6 L809.3,228.9 L811.5,228.1 L813.7,227.2 L815.8,226.3 L817.9,225.5 L818.0,225.4 L820.2,224.5 L822.4,223.4 L824.6,222.4 L826.8,221.3 L829.0,220.2 L831.2,219.1 L833.4,217.9 L835.6,216.7 L837.8,215.5 L840.0,214.2 L842.1,213.0 L844.3,211.7 L846.5,210.4 L848.7,209.1 L850.9,207.7 L853.1,206.4 L855.3,205.0 L857.5,203.7 L859.7,202.3 L861.9,201.0 L864.1,199.6 L866.3,198.3 L868.5,197.0 L870.6,195.6 L872.8,194.3 L875.0,193.0 L877.2,191.7 L879.4,190.5 L881.6,189.2 L883.8,188.0 L886.0,186.8 L888.2,185.6 L890.4,184.5 L892.6,183.4 L894.8,182.3 L897.0,181.2 L899.1,180.2 L901.3,179.2 L903.5,178.3 L905.7,177.4 L907.9,176.5 L910.1,175.7 L912.3,174.9 L914.5,174.1 L916.7,173.4 L918.9,172.8 L921.1,172.2 L923.3,171.6 L925.4,171.1 L927.6,170.6 L929.8,170.2 L932.0,169.8 L934.2,169.5 L936.4,169.2 L938.6,169.0 L940.8,168.8 L943.0,168.6 L945.2,168.5 L947.4,168.5 L949.6,168.5 L951.8,168.5 L953.9,168.6 L956.1,168.8 L958.3,169.0 L960.5,169.2 L962.7,169.5 L964.9,169.9 L967.1,170.3 L969.3,170.7 L971.5,171.2 L973.7,171.7 L975.9,172.3 L978.1,172.9 L980.2,173.5 L982.4,174.2 L984.6,175.0 L986.8,175.8 L989.0,176.6 L991.2,177.5 L993.4,178.4 L995.6,179.3 L997.8,180.3 L1000.0,181.3 L1002.2,182.4 L1004.4,183.5 L1006.6,184.7 L1008.7,185.9 L1010.9,187.1 L1013.1,188.3 L1015.3,189.6 L1017.5,191.0 L1019.7,192.3 L1021.9,193.7 L1024.1,195.2 L1026.3,196.6 L1028.5,198.1 L1030.7,199.7 L1032.9,201.2 L1035.1,202.8 L1037.2,204.4 L1039.4,206.1 L1041.6,207.8 L1043.8,209.5 L1046.0,211.2 L1048.2,213.0 L1050.4,214.8 L1052.6,216.6 L1054.8,218.5 L1057.0,220.3 L1059.2,222.2 L1061.4,224.2 L1063.5,226.1 L1065.7,228.1 L1067.9,230.1 L1070.1,232.1 L1072.3,234.2 L1074.5,236.2 L1076.7,238.3 L1078.9,240.4 L1081.1,242.5 L1083.3,244.7 L1085.5,246.9 L1087.7,249.0 L1089.9,251.3 L1092.0,253.5 L1094.2,255.7 L1096.4,258.0 L1098.6,260.3 L1100.8,262.6 L1103.0,264.9 L1105.2,267.2 L1107.4,269.6 L1109.6,271.9 L1111.8,274.3 L1114.0,276.7 L1116.2,279.1 L1118.4,281.5 L1120.5,284.0 L1122.7,286.4 L1124.9,288.9 L1127.1,291.4 L1129.3,293.9 L1131.5,296.4 L1133.7,298.9 L1135.9,301.4 L1138.1,304.0 L1140.3,306.5 L1142.5,309.1 L1144.7,311.6 L1146.8,314.2 L1149.0,316.8 L1151.2,319.4 L1153.4,322.1 L1155.6,324.7 L1157.8,327.3 L1160.0,330.0 L1162.2,332.6 L1164.4,335.3 L1166.6,338.0 L1168.8,340.6 L1171.0,343.3 L1173.2,346.0 L1175.3,348.7 L1177.5,351.4 L1179.7,354.2 L1181.9,356.9 L1184.1,359.6 L1186.3,362.4 L1188.5,365.1 L1190.7,367.9 L1192.9,370.6 L1195.1,373.4 L1197.3,376.2 L1199.5,378.9 L1201.6,381.7 L1203.8,384.5" stroke="#555" stroke-width="1" fill="none"/>
<path d="M329.2,466.3 L331.4,463.3 L333.6,460.4 L335.8,457.4 L338.0,454.5 L340.2,451.5 L342.4,448.6 L344.5,445.6 L346.7,442.7 L348.9,439.8 L351.1,436.8 L353.3,433.9 L355.5,430.9 L357.7,428.0 L359.9,425.1 L362.1,422.1 L364.3,419.2 L366.5,416.3 L368.7,413.4 L370.9,410.5 L373.0,407.5 L375.2,404.6 L377.4,401.7 L379.6,398.8 L381.8,395.9 L384.0,393.0 L386.2,390.1 L388.4,387.2 L390.6,384.3 L392.8,381.4 L395.0,378.6 L397.2,375.7 L399.3,372.8 L401.5,369.9 L403.7,367.1 L405.9,364.2 L408.1,361.4 L410.3,358.5 L412.5,355.7 L414.7,352.8 L416.9,350.0 L419.1,347.2 L421.3,344.4 L423.5,341.6 L425.7,338.8 L427.8,336.0 L430.0,333.2 L432.2,330.4 L434.4,327.6 L436.6,324.9 L438.8,322.1 L441.0,319.4 L443.2,316.6 L445.4,313.9 L447.6,311.2 L449.8,308.5 L452.0,305.8 L454.2,303.1 L456.3,300.4 L458.5,297.8 L460.7,295.1 L462.9,292.5 L465.1,289.9 L467.3,287.3 L469.5,284.7 L471.7,282.1 L473.9,279.5 L476.1,276.9 L478.3,274.4 L480.5,271.9 L482.6,269.4 L484.8,266.9 L487.0,264.4 L489.2,261.9 L491.4,259.5 L493.6,257.1 L495.8,254.7 L498.0,252.3 L500.2,249.9 L502.4,247.6 L504.6,245.3 L506.8,243.0 L509.0,240.7 L511.1,238.4 L513.3,236.2 L515.5,234.0 L517.7,231.8 L519.9,229.7 L522.1,227.5 L524.3,225.4 L526.5,223.3 L528.7,221.3 L530.9,219.3 L533.1,217.3 L535.3,215.3 L537.4,213.4 L539.6,211.4 L541.8,209.6 L544.0,207.7 L546.2,205.9 L548.4,204.1 L550.6,202.4 L552.8,200.7 L555.0,199.0 L557.2,197.4 L559.4,195.8 L561.6,194.2 L563.8,192.7 L565.9,191.2 L568.1,189.8 L570.3,188.4 L572.5,187.0 L574.7,185.7 L576.9,184.4 L579.1,183.2 L581.3,182.0 L583.5,180.9 L585.7,179.8 L587.9,178.7 L590.1,177.7 L592.3,176.8 L594.4,175.9 L596.6,175.0 L598.8,174.2 L601.0,173.4 L603.2,172.8 L605.4,172.1 L607.6,171.5 L609.8,171.0 L612.0,170.5 L614.2,170.1 L616.4,169.7 L618.6,169.4 L620.7,169.2 L622.9,169.0 L625.1,168.9 L627.3,168.8 L629.5,168.8 L631.7,168.9 L633.9,169.0 L636.1,169.2 L638.3,169.4 L640.5,169.8 L642.7,170.2 L644.9,170.6 L647.1,171.1 L649.2,171.7 L651.4,172.4 L653.6,173.1 L655.8,174.0 L658.0,174.8 L660.2,175.8 L662.4,176.8 L664.6,177.9 L666.8,179.1 L669.0,180.4 L671.2,181.7 L673.4,183.1 L675.6,184.6 L677.7,186.2 L679.9,187.9 L682.1,189.6 L684.3,191.4 L686.5,193.3 L688.7,195.3 L690.9,197.4 L693.1,199.5 L695.3,201.7 L697.5,204.1 L699.7,206.5 L701.9,208.9 L704.0,211.5 L706.2,214.2 L708.4,216.9 L710.6,219.8 L712.8,222.7 L715.0,225.7 L717.2,228.8 L719.4,232.0 L721.6,235.3 L723.8,238.7 L726.0,242.2 L728.2,245.7 L730.4,249.4 L732.5,253.1 L734.7,257.0 L736.9,260.9 L739.1,264.9 L740.7,267.8 L741.3,267.3 L743.5,265.5 L745.7,263.9 L747.9,262.3 L750.1,260.9 L752.3,259.5 L754.5,258.3 L756.7,257.1 L758.8,256.0 L761.0,255.1 L763.2,254.2 L765.4,253.4 L767.6,252.7 L769.8,252.2 L772.0,251.7 L774.2,251.3 L776.4,251.0 L778.6,250.8 L780.8,250.7 L783.0,250.7 L785.2,250.7 L787.3,250.9 L789.5,251.2 L791.7,251.6 L793.9,252.1 L796.1,252.6 L798.3,253.3 L800.5,254.0 L802.7,254.9 L804.9,255.8 L807.1,256.9 L809.3,258.0 L811.5,259.3 L813.7,260.6 L815.8,262.0 L817.9,263.4 L818.0,263.1 L820.2,258.7 L822.4,254.5 L824.6,250.3 L826.8,246.3 L829.0,242.3 L831.2,238.4 L833.4,234.6 L835.6,230.9 L837.8,227.3 L840.0,223.8 L842.1,220.3 L844.3,217.0 L846.5,213.7 L848.7,210.6 L850.9,207.5 L853.1,204.5 L855.3,201.6 L857.5,198.8 L859.7,196.0 L861.9,193.4 L864.1,190.8 L866.3,188.3 L868.5,185.9 L870.6,183.6 L872.8,181.4 L875.0,179.2 L877.2,177.1 L879.4,175.1 L881.6,173.2 L883.8,171.4 L886.0,169.6 L888.2,167.9 L890.4,166.3 L892.6,164.7 L894.8,163.3 L897.0,161.9 L899.1,160.6 L901.3,159.3 L903.5,158.2 L905.7,157.1 L907.9,156.0 L910.1,155.1 L912.3,154.2 L914.5,153.4 L916.7,152.6 L918.9,151.9 L921.1,151.3 L923.3,150.7 L925.4,150.2 L927.6,149.8 L929.8,149.4 L932.0,149.1 L934.2,148.9 L936.4,148.7 L938.6,148.6 L940.8,148.5 L943.0,148.5 L945.2,148.6 L947.4,148.7 L949.6,148.8 L951.8,149.1 L953.9,149.3 L956.1,149.7 L958.3,150.0 L960.5,150.5 L962.7,151.0 L964.9,151.5 L967.1,152.1 L969.3,152.7 L971.5,153.4 L973.7,154.1 L975.9,154.9 L978.1,155.7 L980.2,156.6 L982.4,157.5 L984.6,158.5 L986.8,159.5 L989.0,160.5 L991.2,161.6 L993.4,162.7 L995.6,163.9 L997.8,165.1 L1000.0,166.4 L1002.2,167.7 L1004.4,169.0 L1006.6,170.3 L1008.7,171.7 L1010.9,173.2 L1013.1,174.7 L1015.3,176.2 L1017.5,177.7 L1019.7,179.3 L1021.9,180.9 L1024.1,182.5 L1026.3,184.2 L1028.5,185.9 L1030.7,187.6 L1032.9,189.4 L1035.1,191.2 L1037.2,193.0 L1039.4,194.8 L1041.6,196.7 L1043.8,198.6 L1046.0,200.6 L1048.2,202.5 L1050.4,204.5 L1052.6,206.5 L1054.8,208.5 L1057.0,210.6 L1059.2,212.7 L1061.4,214.8 L1063.5,216.9 L1065.7,219.0 L1067.9,221.2 L1070.1,223.4 L1072.3,225.6 L1074.5,227.8 L1076.7,230.1 L1078.9,232.3 L1081.1,234.6 L1083.3,236.9 L1085.5,239.3 L1087.7,241.6 L1089.9,244.0 L1092.0,246.3 L1094.2,248.7 L1096.4,251.1 L1098.6,253.5 L1100.8,256.0 L1103.0,258.4 L1105.2,260.9 L1107.4,263.4 L1109.6,265.9 L1111.8,268.4 L1114.0,270.9 L1116.2,273.4 L1118.4,276.0 L1120.5,278.6 L1122.7,281.1 L1124.9,283.7 L1127.1,286.3 L1129.3,288.9 L1131.5,291.5 L1133.7,294.1 L1135.9,296.8 L1138.1,299.4 L1140.3,302.1 L1142.5,304.8 L1144.7,307.4 L1146.8,310.1 L1149.0,312.8 L1151.2,315.5 L1153.4,318.2 L1155.6,320.9 L1157.8,323.7 L1160.0,326.4 L1162.2,329.1 L1164.4,331.9 L1166.6,334.6 L1168.8,337.4 L1171.0,340.2 L1173.2,343.0 L1175.3,345.7 L1177.5,348.5 L1179.7,351.3 L1181.9,354.1 L1184.1,356.9 L1186.3,359.7 L1188.5,362.5 L1190.7,365.4 L1192.9,368.2 L1195.1,371.0 L1197.3,373.9 L1199.5,376.7 L1201.6,379.5 L1203.8,382.4" stroke="#1c1c1c" stroke-width="2.05" fill="none" stroke-linejoin="round"/>
<circle cx="627.4" cy="180.2" r="2.2" fill="#a8a8a8"/>
<circle cx="627.4" cy="185.5" r="2.6" fill="#555"/>
<circle cx="627.4" cy="168.8" r="2.8" fill="#1c1c1c"/>
<text y="96.3" class="ct"><tspan x="449.90" textLength="66.95" lengthAdjust="spacingAndGlyphs">Портфель:</tspan> <tspan x="522.65" textLength="22.95" lengthAdjust="spacingAndGlyphs">Ось</tspan> <tspan x="551.15" textLength="13.20" lengthAdjust="spacingAndGlyphs">X:</tspan> <tspan x="570.65" textLength="41.95" lengthAdjust="spacingAndGlyphs">132670</tspan> <tspan x="616.90" textLength="23.70" lengthAdjust="spacingAndGlyphs">Ось</tspan> <tspan x="644.90" textLength="14.45" lengthAdjust="spacingAndGlyphs">Y:</tspan> <tspan x="669.40" textLength="55.70" lengthAdjust="spacingAndGlyphs">(Текущий</tspan> <tspan x="729.90" textLength="50.20" lengthAdjust="spacingAndGlyphs">3017,09)</tspan> <tspan x="788.90" textLength="18.70" lengthAdjust="spacingAndGlyphs">(+1</tspan> <tspan x="811.90" textLength="17.45" lengthAdjust="spacingAndGlyphs">дн.</tspan> <tspan x="836.90" textLength="49.95" lengthAdjust="spacingAndGlyphs">3273,39)</tspan> <tspan x="896.90" textLength="20.70" lengthAdjust="spacingAndGlyphs">(На</tspan> <tspan x="921.90" textLength="73.20" lengthAdjust="spacingAndGlyphs">экспирацию</tspan> <tspan x="999.90" textLength="50.70" lengthAdjust="spacingAndGlyphs">3815,16)</tspan></text>
<path class="hl" d="M496,229 L502,229 L504.2,230.4 L507.5,234.2 L511.5,235.5 L517.7,241 L518,258 L511,258 L509.3,255 L505.3,252.7 L501.2,250.2 L496,245.8 Z"/>
<path class="hl" d="M1071,241 L1074.2,238 L1080.8,233.2 L1088.1,228.1 L1095.4,223.7 L1103.5,221 L1109,220.8 L1109,237.6 L1094,246.8 L1088.1,249.7 L1079.3,255.5 L1071,256.6 Z"/>
</svg></div>
<div class="a" style="left:4px;top:526px;width:1277px;height:1px;background:#808080"></div>
<div class="a" style="left:4px;top:527px;width:1277px;height:1px;background:#404040"></div>
<div class="a" style="left:4px;top:528px;width:1277px;height:1px;background:#f5f5f5"></div>
<div class="a" style="left:5px;top:529px;width:1276px;height:2px;background-image:repeating-conic-gradient(#000 0 25%,#f5f5f5 0 50%);background-size:2px 2px;background-position:1px 0"></div>
<div class="a" style="left:4px;top:531px;width:1277px;height:262px;background:#f5f5f5"></div>
<div class="a grp" style="left:4px;top:537px;width:1278px;height:256px;border-bottom:none"></div>
<div class="a t" style="left:12px;top:531px;background:#f5f5f5;padding:0 3px">Портфель</div>
<div class="a sunken" style="left:10px;top:554px;width:91px;height:21px;background:#fff"><div class="a t" style="left:3px;top:3px">2.пут-спред</div><div class="a raised" style="left:72px;top:2px;width:17px;height:17px;background:#d4d0c8"><svg class="a" style="left:5px;top:7px" width="7" height="4" viewBox="0 0 7 4" shape-rendering="crispEdges"><path d="M0,0 H7 L3.5,4 Z" fill="#000"/></svg></div></div>
<div class="a raised" style="left:108px;top:552px;width:55px;height:23px;background:#d4d0c8"><div class="a t" style="left:0;top:4px;width:55px;text-align:center">Импорт</div></div>
<div class="a raised" style="left:169px;top:552px;width:57px;height:23px;background:#d4d0c8"><div class="a t" style="left:0;top:4px;width:57px;text-align:center">Удалить</div></div>
<div class="a raised" style="left:232px;top:552px;width:71px;height:23px;background:#d4d0c8"><div class="a t" style="left:0;top:4px;width:71px;text-align:center">Сохранить</div></div>
<div class="a sunken" style="left:318px;top:558px;width:13px;height:13px;background:#d4d0c8"></div>
<div class="a t" style="left:339px;top:559px;color:#808080">DH</div>
<div class="a sunken" style="left:366px;top:555px;width:33px;height:20px;background:#d4d0c8"><div class="a t" style="left:4px;top:3px">0</div><div class="a raised" style="left:16px;top:2px;width:15px;height:8px;background:#d4d0c8"><svg class="a" style="left:5px;top:2px" width="5" height="3"><path d="M0,3 H5 L2.5,0 Z" fill="#000"/></svg></div><div class="a raised" style="left:16px;top:10px;width:15px;height:8px;background:#d4d0c8"><svg class="a" style="left:5px;top:3px" width="5" height="3"><path d="M0,0 H5 L2.5,3 Z" fill="#000"/></svg></div></div>
<div class="a sunken" style="left:405px;top:555px;width:33px;height:20px;background:#d4d0c8"><div class="a t" style="left:4px;top:3px">1</div><div class="a raised" style="left:16px;top:2px;width:15px;height:8px;background:#d4d0c8"><svg class="a" style="left:5px;top:2px" width="5" height="3"><path d="M0,3 H5 L2.5,0 Z" fill="#000"/></svg></div><div class="a raised" style="left:16px;top:10px;width:15px;height:8px;background:#d4d0c8"><svg class="a" style="left:5px;top:3px" width="5" height="3"><path d="M0,0 H5 L2.5,3 Z" fill="#000"/></svg></div></div>
<div class="a sunken" style="left:472px;top:557px;width:13px;height:13px;background:#f4f4f4"></div>
<div class="a t" style="left:492px;top:558px;">M</div>
<div class="a t" style="left:567px;top:557px;">D</div>
<div class="a sunken" style="left:585px;top:554px;width:31px;height:20px;background:#f0f0f0"><div class="a t" style="left:0;top:3px;width:31px;text-align:center">0</div></div>
<div class="a t" style="left:625px;top:557px;">V1</div>
<div class="a sunken" style="left:648px;top:554px;width:31px;height:20px;background:#f0f0f0"><div class="a t" style="left:0;top:3px;width:31px;text-align:center">0</div></div>
<div class="a t" style="left:687px;top:557px;">V2</div>
<div class="a sunken" style="left:711px;top:554px;width:32px;height:20px;background:#f0f0f0"><div class="a t" style="left:0;top:3px;width:32px;text-align:center">0</div></div>
<div class="a t" style="left:777px;top:557px;">P1</div>
<div class="a sunken" style="left:794px;top:554px;width:55px;height:20px;background:#f0f0f0"><div class="a t" style="left:0;top:3px;width:55px;text-align:center">0</div></div>
<div class="a t" style="left:858px;top:557px;">RIH1 141700</div>
<div class="a t" style="left:929px;top:557px;">P2</div>
<div class="a sunken" style="left:955px;top:555px;width:56px;height:19px;background:#f0f0f0"><div class="a t" style="left:0;top:2px;width:56px;text-align:center;color:#808080">0</div></div>
<div class="a t" style="left:1021px;top:558px;">RIH1 141700</div>
<div class="a" style="left:1091px;top:551px;width:96px;height:23px;background:#000"><div class="a raised" style="left:1px;top:1px;width:94px;height:21px;background:#d4d0c8"><div class="a t" style="left:0;top:3px;width:94px;text-align:center">Рассчитать ГО</div></div></div>
<div class="a t" style="left:1196px;top:558px;">-15582,35 п.</div>
<div class="a" style="left:1273px;top:571px;width:8px;height:2px;background:#404040"></div>
<div class="a" style="left:10px;top:581px;width:1271px;height:211px;background:#f5f5f5;border-left:1px solid #000;border-top:1px solid #000;box-sizing:border-box"></div>
<div class="a" style="left:11px;top:584px;width:1270px;height:28px;background:#d3d3d3"></div>
<div class="a t th" style="left:12px;top:592px;width:49px">Расчет</div>
<div class="a" style="left:61px;top:585px;width:1px;height:26px;background:#808080"></div>
<div class="a" style="left:62px;top:585px;width:1px;height:26px;background:#fff"></div>
<div class="a t th" style="left:62px;top:592px;width:228px">Код бумаги</div>
<div class="a" style="left:290px;top:585px;width:1px;height:26px;background:#808080"></div>
<div class="a" style="left:291px;top:585px;width:1px;height:26px;background:#fff"></div>
<div class="a t th" style="left:291px;top:585px;width:68px">Тип<br>опциона</div>
<div class="a" style="left:359px;top:585px;width:1px;height:26px;background:#808080"></div>
<div class="a" style="left:360px;top:585px;width:1px;height:26px;background:#fff"></div>
<div class="a t th" style="left:360px;top:585px;width:86px">Дата<br>погашения</div>
<div class="a" style="left:446px;top:585px;width:1px;height:26px;background:#808080"></div>
<div class="a" style="left:447px;top:585px;width:1px;height:26px;background:#fff"></div>
<div class="a t th" style="left:447px;top:585px;width:101px">Дней до<br>погашения</div>
<div class="a" style="left:548px;top:585px;width:1px;height:26px;background:#808080"></div>
<div class="a" style="left:549px;top:585px;width:1px;height:26px;background:#fff"></div>
<div class="a t th" style="left:549px;top:592px;width:71px">Количество</div>
<div class="a" style="left:620px;top:585px;width:1px;height:26px;background:#808080"></div>
<div class="a" style="left:621px;top:585px;width:1px;height:26px;background:#fff"></div>
<div class="a t th" style="left:621px;top:585px;width:80px">Цена<br>открытия</div>
<div class="a" style="left:701px;top:585px;width:1px;height:26px;background:#808080"></div>
<div class="a" style="left:702px;top:585px;width:1px;height:26px;background:#fff"></div>
<div class="a t th" style="left:702px;top:585px;width:126px">Волатильность<br>открытия</div>
<div class="a" style="left:828px;top:585px;width:1px;height:26px;background:#808080"></div>
<div class="a" style="left:829px;top:585px;width:1px;height:26px;background:#fff"></div>
<div class="a t th" style="left:829px;top:585px;width:104px">Теоретическая<br>цена</div>
<div class="a" style="left:933px;top:585px;width:1px;height:26px;background:#808080"></div>
<div class="a" style="left:934px;top:585px;width:1px;height:26px;background:#fff"></div>
<div class="a t th" style="left:934px;top:592px;width:51px">Профит</div>
<div class="a" style="left:985px;top:585px;width:1px;height:26px;background:#808080"></div>
<div class="a" style="left:986px;top:585px;width:1px;height:26px;background:#fff"></div>
<div class="a t th" style="left:986px;top:592px;width:89px">Волатильность</div>
<div class="a" style="left:1075px;top:585px;width:1px;height:26px;background:#808080"></div>
<div class="a" style="left:1076px;top:585px;width:1px;height:26px;background:#fff"></div>
<div class="a t th" style="left:1076px;top:592px;width:50px">Дельта</div>
<div class="a" style="left:1126px;top:585px;width:1px;height:26px;background:#808080"></div>
<div class="a" style="left:1127px;top:585px;width:1px;height:26px;background:#fff"></div>
<div class="a t th" style="left:1127px;top:592px;width:55px">Гамма</div>
<div class="a" style="left:1182px;top:585px;width:1px;height:26px;background:#808080"></div>
<div class="a" style="left:1183px;top:585px;width:1px;height:26px;background:#fff"></div>
<div class="a t th" style="left:1183px;top:592px;width:43px">Вега</div>
<div class="a" style="left:1226px;top:585px;width:1px;height:26px;background:#808080"></div>
<div class="a" style="left:1227px;top:585px;width:1px;height:26px;background:#fff"></div>
<div class="a t th" style="left:1227px;top:592px;width:43px">Тета</div>
<div class="a" style="left:1270px;top:585px;width:1px;height:26px;background:#808080"></div>
<div class="a" style="left:1271px;top:585px;width:1px;height:26px;background:#fff"></div>
<div class="a t" style="left:1277px;top:592px">X</div>
<div class="a" style="left:11px;top:612px;width:1270px;height:1px;background:#808080"></div>
<div class="a" style="left:11px;top:634px;width:1270px;height:1px;background:#000"></div>
<div class="a sunken" style="left:30px;top:617px;width:13px;height:13px;background:#fff"><svg class="a" style="left:3px;top:3px" width="7" height="7" viewBox="0 0 7 7" shape-rendering="crispEdges"><path d="M0.5,2 V5 M1.5,3 V6 M2.5,4 V7 M3.5,3 V6 M4.5,2 V5 M5.5,1 V4 M6.5,0 V3" stroke="#000" stroke-width="1" fill="none"/></svg></div>
<div class="a t td" style="left:62px;top:617px;width:228px;color:#000">RI145000BA1D</div>
<div class="a t td" style="left:291px;top:617px;width:68px;color:#000">Call</div>
<div class="a t td" style="left:360px;top:617px;width:86px;color:#000">28.01.2021</div>
<div class="a t td" style="left:447px;top:617px;width:101px;color:#000">3</div>
<div class="a t td" style="left:549px;top:617px;width:71px;color:#000">2</div>
<div class="a t td" style="left:621px;top:617px;width:80px;color:#000">370</div>
<div class="a t td" style="left:702px;top:617px;width:126px;color:#000">29,29</div>
<div class="a t td" style="left:829px;top:617px;width:104px;color:#000">348,53</div>
<div class="a" style="left:934px;top:613px;width:51px;height:21px;background:#ffb6c1"></div>
<div class="a t td" style="left:934px;top:617px;width:51px;color:#000">-42,94</div>
<div class="a t td" style="left:986px;top:617px;width:89px;color:#000">28,64</div>
<div class="a t td" style="left:1076px;top:617px;width:50px;color:#000">0,36</div>
<div class="a t td" style="left:1127px;top:617px;width:55px;color:#000">0,000149</div>
<div class="a t td" style="left:1183px;top:617px;width:43px;color:#000">65,61</div>
<div class="a t td" style="left:1227px;top:617px;width:43px;color:#000">-336,25</div>
<div class="a raised" style="left:1271px;top:613px;width:30px;height:21px;background:#f0f0f0"><div class="a t" style="left:8px;top:4px">X</div></div>
<div class="a" style="left:11px;top:656px;width:1270px;height:1px;background:#000"></div>
<div class="a sunken" style="left:30px;top:639px;width:13px;height:13px;background:#fff"><svg class="a" style="left:3px;top:3px" width="7" height="7" viewBox="0 0 7 7" shape-rendering="crispEdges"><path d="M0.5,2 V5 M1.5,3 V6 M2.5,4 V7 M3.5,3 V6 M4.5,2 V5 M5.5,1 V4 M6.5,0 V3" stroke="#000" stroke-width="1" fill="none"/></svg></div>
<div class="a t td" style="left:62px;top:639px;width:228px;color:#000">RI140000BM1D</div>
<div class="a t td" style="left:291px;top:639px;width:68px;color:#000">Put</div>
<div class="a t td" style="left:360px;top:639px;width:86px;color:#000">28.01.2021</div>
<div class="a t td" style="left:447px;top:639px;width:101px;color:#000">3</div>
<div class="a" style="left:549px;top:635px;width:71px;height:21px;background:#0a246a"></div>
<div class="a t td" style="left:549px;top:639px;width:71px;color:#fff">2</div>
<div class="a t td" style="left:621px;top:639px;width:80px;color:#000">830</div>
<div class="a t td" style="left:702px;top:639px;width:126px;color:#000">31,17</div>
<div class="a t td" style="left:829px;top:639px;width:104px;color:#000">816,28</div>
<div class="a" style="left:934px;top:635px;width:51px;height:21px;background:#ffb6c1"></div>
<div class="a t td" style="left:934px;top:639px;width:51px;color:#000">-27,44</div>
<div class="a t td" style="left:986px;top:639px;width:89px;color:#000">30,86</div>
<div class="a t td" style="left:1076px;top:639px;width:50px;color:#000">-0,65</div>
<div class="a t td" style="left:1127px;top:639px;width:55px;color:#000">0,000188</div>
<div class="a t td" style="left:1183px;top:639px;width:43px;color:#000">88,97</div>
<div class="a t td" style="left:1227px;top:639px;width:43px;color:#000">-491,3</div>
<div class="a raised" style="left:1271px;top:635px;width:30px;height:21px;background:#f0f0f0"><div class="a t" style="left:8px;top:4px">X</div></div>
<div class="a" style="left:11px;top:678px;width:1270px;height:1px;background:#000"></div>
<div class="a sunken" style="left:30px;top:661px;width:13px;height:13px;background:#fff"><svg class="a" style="left:3px;top:3px" width="7" height="7" viewBox="0 0 7 7" shape-rendering="crispEdges"><path d="M0.5,2 V5 M1.5,3 V6 M2.5,4 V7 M3.5,3 V6 M4.5,2 V5 M5.5,1 V4 M6.5,0 V3" stroke="#000" stroke-width="1" fill="none"/></svg></div>
<div class="a t td" style="left:62px;top:661px;width:228px;color:#000">RI140000BN1</div>
<div class="a t td" style="left:291px;top:661px;width:68px;color:#000">Put</div>
<div class="a t td" style="left:360px;top:661px;width:86px;color:#000">18.02.2021</div>
<div class="a t td" style="left:447px;top:661px;width:101px;color:#000">24</div>
<div class="a t td" style="left:549px;top:661px;width:71px;color:#000">-5</div>
<div class="a t td" style="left:621px;top:661px;width:80px;color:#000">2980</div>
<div class="a t td" style="left:702px;top:661px;width:126px;color:#000">26,28</div>
<div class="a t td" style="left:829px;top:661px;width:104px;color:#000">3492,12</div>
<div class="a" style="left:934px;top:657px;width:51px;height:21px;background:#ffb6c1"></div>
<div class="a t td" style="left:934px;top:661px;width:51px;color:#000">-2560,6</div>
<div class="a t td" style="left:986px;top:661px;width:89px;color:#000">29,9</div>
<div class="a t td" style="left:1076px;top:661px;width:50px;color:#000">2,11</div>
<div class="a t td" style="left:1127px;top:661px;width:55px;color:#000">-0,000181</div>
<div class="a t td" style="left:1183px;top:661px;width:43px;color:#000">-707,9</div>
<div class="a t td" style="left:1227px;top:661px;width:43px;color:#000">444,78</div>
<div class="a raised" style="left:1271px;top:657px;width:30px;height:21px;background:#f0f0f0"><div class="a t" style="left:8px;top:4px">X</div></div>
<div class="a" style="left:11px;top:700px;width:1270px;height:1px;background:#000"></div>
<div class="a sunken" style="left:30px;top:683px;width:13px;height:13px;background:#fff"><svg class="a" style="left:3px;top:3px" width="7" height="7" viewBox="0 0 7 7" shape-rendering="crispEdges"><path d="M0.5,2 V5 M1.5,3 V6 M2.5,4 V7 M3.5,3 V6 M4.5,2 V5 M5.5,1 V4 M6.5,0 V3" stroke="#000" stroke-width="1" fill="none"/></svg></div>
<div class="a t td" style="left:62px;top:683px;width:228px;color:#000">RI142500BN1</div>
<div class="a t td" style="left:291px;top:683px;width:68px;color:#000">Put</div>
<div class="a t td" style="left:360px;top:683px;width:86px;color:#000">18.02.2021</div>
<div class="a t td" style="left:447px;top:683px;width:101px;color:#000">24</div>
<div class="a t td" style="left:549px;top:683px;width:71px;color:#000">5</div>
<div class="a t td" style="left:621px;top:683px;width:80px;color:#000">3940</div>
<div class="a t td" style="left:702px;top:683px;width:126px;color:#000">24,36</div>
<div class="a t td" style="left:829px;top:683px;width:104px;color:#000">4611,56</div>
<div class="a" style="left:934px;top:679px;width:51px;height:21px;background:#90ee90"></div>
<div class="a t td" style="left:934px;top:683px;width:51px;color:#000">3357,8</div>
<div class="a t td" style="left:986px;top:683px;width:89px;color:#000">29,02</div>
<div class="a t td" style="left:1076px;top:683px;width:50px;color:#000">-2,58</div>
<div class="a t td" style="left:1127px;top:683px;width:55px;color:#000">0,00019</div>
<div class="a t td" style="left:1183px;top:683px;width:43px;color:#000">721,13</div>
<div class="a t td" style="left:1227px;top:683px;width:43px;color:#000">-439,75</div>
<div class="a raised" style="left:1271px;top:679px;width:30px;height:21px;background:#f0f0f0"><div class="a t" style="left:8px;top:4px">X</div></div>
<div class="a" style="left:11px;top:722px;width:1270px;height:1px;background:#000"></div>
<div class="a sunken" style="left:30px;top:705px;width:13px;height:13px;background:#fff"><svg class="a" style="left:3px;top:3px" width="7" height="7" viewBox="0 0 7 7" shape-rendering="crispEdges"><path d="M0.5,2 V5 M1.5,3 V6 M2.5,4 V7 M3.5,3 V6 M4.5,2 V5 M5.5,1 V4 M6.5,0 V3" stroke="#000" stroke-width="1" fill="none"/></svg></div>
<div class="a t td" style="left:62px;top:705px;width:228px;color:#000">RI145000BN1</div>
<div class="a t td" style="left:291px;top:705px;width:68px;color:#000">Put</div>
<div class="a t td" style="left:360px;top:705px;width:86px;color:#000">18.02.2021</div>
<div class="a t td" style="left:447px;top:705px;width:101px;color:#000">24</div>
<div class="a t td" style="left:549px;top:705px;width:71px;color:#000">-3</div>
<div class="a t td" style="left:621px;top:705px;width:80px;color:#000">5890</div>
<div class="a t td" style="left:702px;top:705px;width:126px;color:#000">27,59</div>
<div class="a t td" style="left:829px;top:705px;width:104px;color:#000">5985</div>
<div class="a" style="left:934px;top:701px;width:51px;height:21px;background:#ffb6c1"></div>
<div class="a t td" style="left:934px;top:705px;width:51px;color:#000">-285</div>
<div class="a t td" style="left:986px;top:705px;width:89px;color:#000">28,27</div>
<div class="a t td" style="left:1076px;top:705px;width:50px;color:#000">1,83</div>
<div class="a t td" style="left:1127px;top:705px;width:55px;color:#000">-0,000112</div>
<div class="a t td" style="left:1183px;top:705px;width:43px;color:#000">-416,02</div>
<div class="a t td" style="left:1227px;top:705px;width:43px;color:#000">247,14</div>
<div class="a raised" style="left:1271px;top:701px;width:30px;height:21px;background:#f0f0f0"><div class="a t" style="left:8px;top:4px">X</div></div>
<div class="a" style="left:11px;top:744px;width:1270px;height:1px;background:#000"></div>
<div class="a sunken" style="left:30px;top:727px;width:13px;height:13px;background:#fff"><svg class="a" style="left:3px;top:3px" width="7" height="7" viewBox="0 0 7 7" shape-rendering="crispEdges"><path d="M0.5,2 V5 M1.5,3 V6 M2.5,4 V7 M3.5,3 V6 M4.5,2 V5 M5.5,1 V4 M6.5,0 V3" stroke="#000" stroke-width="1" fill="none"/></svg></div>
<div class="a t td" style="left:62px;top:727px;width:228px;color:#000">RI145000BB1</div>
<div class="a t td" style="left:291px;top:727px;width:68px;color:#000">Call</div>
<div class="a t td" style="left:360px;top:727px;width:86px;color:#000">18.02.2021</div>
<div class="a t td" style="left:447px;top:727px;width:101px;color:#000">24</div>
<div class="a t td" style="left:549px;top:727px;width:71px;color:#000">-3</div>
<div class="a t td" style="left:621px;top:727px;width:80px;color:#000">2770</div>
<div class="a t td" style="left:702px;top:727px;width:126px;color:#000">28,88</div>
<div class="a t td" style="left:829px;top:727px;width:104px;color:#000">2685</div>
<div class="a" style="left:934px;top:723px;width:51px;height:21px;background:#90ee90"></div>
<div class="a t td" style="left:934px;top:727px;width:51px;color:#000">255</div>
<div class="a t td" style="left:986px;top:727px;width:89px;color:#000">28,27</div>
<div class="a t td" style="left:1076px;top:727px;width:50px;color:#000">-1,17</div>
<div class="a t td" style="left:1127px;top:727px;width:55px;color:#000">-0,000112</div>
<div class="a t td" style="left:1183px;top:727px;width:43px;color:#000">-416,02</div>
<div class="a t td" style="left:1227px;top:727px;width:43px;color:#000">247,14</div>
<div class="a raised" style="left:1271px;top:723px;width:30px;height:21px;background:#f0f0f0"><div class="a t" style="left:8px;top:4px">X</div></div>
<div class="a" style="left:11px;top:766px;width:1270px;height:1px;background:#000"></div>
<div class="a sunken" style="left:30px;top:749px;width:13px;height:13px;background:#fff"><svg class="a" style="left:3px;top:3px" width="7" height="7" viewBox="0 0 7 7" shape-rendering="crispEdges"><path d="M0.5,2 V5 M1.5,3 V6 M2.5,4 V7 M3.5,3 V6 M4.5,2 V5 M5.5,1 V4 M6.5,0 V3" stroke="#000" stroke-width="1" fill="none"/></svg></div>
<div class="a t td" style="left:62px;top:749px;width:228px;color:#000">FixedProfit</div>
<div class="a t td" style="left:934px;top:749px;width:51px;color:#000">0</div>
<div class="a raised" style="left:1271px;top:745px;width:30px;height:21px;background:#f0f0f0"><div class="a t" style="left:8px;top:4px">X</div></div>
<div class="a" style="left:11px;top:788px;width:1270px;height:1px;background:#000"></div>
<div class="a sunken" style="left:30px;top:771px;width:13px;height:13px;background:#fff"><svg class="a" style="left:3px;top:3px" width="7" height="7" viewBox="0 0 7 7" shape-rendering="crispEdges"><path d="M0.5,2 V5 M1.5,3 V6 M2.5,4 V7 M3.5,3 V6 M4.5,2 V5 M5.5,1 V4 M6.5,0 V3" stroke="#000" stroke-width="1" fill="none"/></svg></div>
<div class="a t td" style="left:62px;top:771px;width:228px;color:#000">Итого:</div>
<div class="a" style="left:934px;top:767px;width:51px;height:21px;background:#90ee90"></div>
<div class="a t td" style="left:934px;top:771px;width:51px;color:#000">696,82</div>
<div class="a t td" style="left:1076px;top:771px;width:50px;color:#000">-0,1</div>
<div class="a t td" style="left:1127px;top:771px;width:55px;color:#000">0,000122</div>
<div class="a t td" style="left:1183px;top:771px;width:43px;color:#000">-664,23</div>
<div class="a t td" style="left:1227px;top:771px;width:43px;color:#000">-328,24</div>
<div class="a raised" style="left:1271px;top:767px;width:30px;height:21px;background:#f0f0f0"><div class="a t" style="left:8px;top:4px">X</div></div>
<div class="a" style="left:61px;top:613px;width:1px;height:176px;background:#000"></div>
<div class="a" style="left:290px;top:613px;width:1px;height:176px;background:#000"></div>
<div class="a" style="left:359px;top:613px;width:1px;height:176px;background:#000"></div>
<div class="a" style="left:446px;top:613px;width:1px;height:176px;background:#000"></div>
<div class="a" style="left:548px;top:613px;width:1px;height:176px;background:#000"></div>
<div class="a" style="left:620px;top:613px;width:1px;height:176px;background:#000"></div>
<div class="a" style="left:701px;top:613px;width:1px;height:176px;background:#000"></div>
<div class="a" style="left:828px;top:613px;width:1px;height:176px;background:#000"></div>
<div class="a" style="left:933px;top:613px;width:1px;height:176px;background:#000"></div>
<div class="a" style="left:985px;top:613px;width:1px;height:176px;background:#000"></div>
<div class="a" style="left:1075px;top:613px;width:1px;height:176px;background:#000"></div>
<div class="a" style="left:1126px;top:613px;width:1px;height:176px;background:#000"></div>
<div class="a" style="left:1182px;top:613px;width:1px;height:176px;background:#000"></div>
<div class="a" style="left:1226px;top:613px;width:1px;height:176px;background:#000"></div>
<div class="a" style="left:1270px;top:613px;width:1px;height:176px;background:#000"></div>
<svg class="a" style="left:0;top:600px;mix-blend-mode:multiply" width="1281" height="70" viewBox="0 600 1281 70"><path class="hl" d="M125,616.2 Q145,613.5 167.5,612.5 L218.8,611.5 L227.5,613 L228.1,616.2 L228.1,629.4 L217.5,629.2 L212.5,630.5 L200,632.5 L210,634.5 L223.8,635.6 L223.8,652.5 L220,653.8 L138.8,653.5 L126.9,652.2 L126.9,648.1 L122.5,647.2 L119,643.8 L119,622.5 L120.6,618.8 Z"/><path class="hl" d="M476,615 L494,616.5 L507,618.8 L517,622.5 L522,627.5 L522,650 L516.5,655.5 L493,655.5 L476,654.5 L456.5,654.5 L456.5,637.2 L476,636.8 L500,636.8 L509,635.5 L500,633.8 L476,632.5 Z"/></svg>
<div class="a" style="left:4px;top:794px;width:1277px;height:21px;background:#d4d4d4"></div>
<div class="a t" style="left:7px;top:798px;">Время обновления 48 мс&nbsp; Profit=696,82 Delta(Δ)=-0,1 Gamma(Γ)=0,000122 Vega=-664,23 Theta(Θ)=-328,24</div>
</div></body></html>
